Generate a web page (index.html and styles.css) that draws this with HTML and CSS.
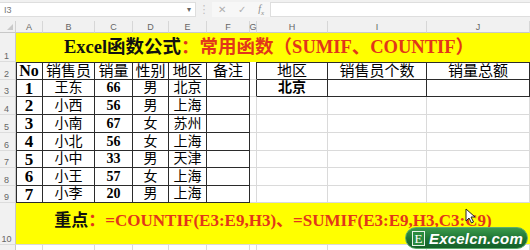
FILE: index.html
```html
<!DOCTYPE html>
<html lang="zh-CN">
<head>
<meta charset="utf-8">
<title>Excel函数公式</title>
<link rel="stylesheet" href="styles.css">
</head>
<body>
<div class="app">
  <div class="fbar">
    <div class="namebox"><span>I3</span><span class="dd">▾</span></div>
    <div class="sep">⋮</div>
    <div class="fxbox"><span class="ico">✕</span><span class="ico">✓</span><span class="ico fx">f<sub>x</sub></span></div>
    <div class="finput"></div>
  </div>
  <div class="sheet">
    <div class="corner"><span class="tri"></span></div>
    <div class="ch">A</div><div class="ch">B</div><div class="ch">C</div><div class="ch">D</div><div class="ch">E</div><div class="ch">F</div><div class="ch">G</div><div class="ch">H</div><div class="ch">I</div><div class="ch">J</div>

    <div class="rh">1</div>
    <div class="title"><span class="blk">Excel函数公式</span><span class="red">：常用函数（SUMIF、COUNTIF）</span></div>

    <div class="rh">2</div>
    <div class="c t tt tl hd num">No</div>
    <div class="c t tt hd">销售员</div>
    <div class="c t tt hd">销量</div>
    <div class="c t tt hd">性别</div>
    <div class="c t tt hd">地区</div>
    <div class="c t tt hd">备注</div>
    <div class="c gr"></div>
    <div class="c t tt hd">地区</div>
    <div class="c t tt hd">销售员个数</div>
    <div class="c t tt hd">销量总额</div>

    <div class="rh">3</div>
    <div class="c t tl num">1</div><div class="c t cj">王东</div><div class="c t sm">66</div><div class="c t cj">男</div><div class="c t cj">北京</div><div class="c t"></div>
    <div class="c gr"></div>
    <div class="c t cj bold">北京</div><div class="c t"></div><div class="c t"></div>

    <div class="rh">4</div>
    <div class="c t tl num">2</div><div class="c t cj">小西</div><div class="c t sm">56</div><div class="c t cj">男</div><div class="c t cj">上海</div><div class="c t"></div>
    <div class="c"></div><div class="c"></div><div class="c"></div><div class="c"></div>

    <div class="rh">5</div>
    <div class="c t tl num">3</div><div class="c t cj">小南</div><div class="c t sm">67</div><div class="c t cj">女</div><div class="c t cj">苏州</div><div class="c t"></div>
    <div class="c"></div><div class="c"></div><div class="c"></div><div class="c"></div>

    <div class="rh">6</div>
    <div class="c t tl num">4</div><div class="c t cj">小北</div><div class="c t sm">56</div><div class="c t cj">女</div><div class="c t cj">上海</div><div class="c t"></div>
    <div class="c"></div><div class="c"></div><div class="c"></div><div class="c"></div>

    <div class="rh">7</div>
    <div class="c t tl num">5</div><div class="c t cj">小中</div><div class="c t sm">33</div><div class="c t cj">男</div><div class="c t cj">天津</div><div class="c t"></div>
    <div class="c"></div><div class="c"></div><div class="c"></div><div class="c"></div>

    <div class="rh">8</div>
    <div class="c t tl num">6</div><div class="c t cj">小王</div><div class="c t sm">57</div><div class="c t cj">女</div><div class="c t cj">上海</div><div class="c t"></div>
    <div class="c"></div><div class="c"></div><div class="c"></div><div class="c"></div>

    <div class="rh">9</div>
    <div class="c t tl num">7</div><div class="c t cj">小李</div><div class="c t sm">20</div><div class="c t cj">男</div><div class="c t cj">上海</div><div class="c t"></div>
    <div class="c"></div><div class="c"></div><div class="c"></div><div class="c"></div>

    <div class="rh">10</div>
    <div class="foot"><span class="blk">重点</span><span class="red">：=COUNTIF(E3:E9,H3)、=SUMIF(E3:E9,H3,C3:C9)</span></div>

    <div class="rh"></div>
    <div class="c"></div><div class="c"></div><div class="c"></div><div class="c"></div><div class="c"></div><div class="c"></div><div class="c"></div><div class="c"></div><div class="c"></div><div class="c"></div>
  </div>

  <svg class="cursor" width="11" height="16" viewBox="0 0 11 16"><path d="M1 1 L1 13 L4 10 L6.5 15 L8.5 14 L6 9 L10 9 Z" fill="#fff" stroke="#222" stroke-width="1"/></svg>

  <div class="logo"><span class="ebox">E</span><span class="ltext">Excelcn.com</span></div>
</div>
</body>
</html>
```
FILE: styles.css
```css
html, body {
  margin: 0;
  padding: 0;
  background: #fff;
}
.app {
  position: relative;
  width: 530px;
  height: 250px;
  overflow: hidden;
  font-family: "Liberation Serif", "Noto Sans CJK SC", serif;
}
.fbar {
  height: 21px;
  background: #f1f1f1;
  display: flex;
  align-items: center;
  box-sizing: border-box;
  padding-bottom: 2px;
}
.namebox {
  width: 196px;
  height: 15px;
  box-sizing: border-box;
  background: #fff;
  border: 1px solid #dedede;
  border-left: none;
  display: flex;
  align-items: center;
  justify-content: space-between;
  padding: 0 4px 0 4px;
  font: 9px "Liberation Sans", sans-serif;
  color: #777;
}
.dd {
  font-size: 8px;
  color: #666;
}
.sep {
  width: 16px;
  text-align: center;
  color: #bdbdbd;
  font: 11px "DejaVu Sans", sans-serif;
}
.fxbox {
  width: 58px;
  height: 15px;
  display: flex;
  align-items: center;
  justify-content: space-around;
  background: #f7f7f7;
  color: #b0b0b0;
  font: 10px "DejaVu Sans", sans-serif;
}
.fx {
  font-family: "Liberation Serif", serif;
  font-style: italic;
  color: #8a8a8a;
}
.fx sub {
  font-size: 7px;
}
.finput {
  flex: 1;
  height: 15px;
  background: #fff;
  border: 1px solid #dedede;
  border-right: none;
  box-sizing: border-box;
}
.sheet {
  display: grid;
  grid-template-columns: 16px 27px 52px 38px 36px 38px 43px 7px 71px 99px 103px;
  grid-template-rows: 12px 29px 18px 17px 18px 18px 18px 17px 18px 17px 42px 12px;
}
.corner {
  background: #f1f1f1;
  border-right: 1px solid #d2d2d2;
  border-bottom: 1px solid #c8c8c8;
  box-sizing: border-box;
  position: relative;
}
.tri {
  position: absolute;
  right: 2px;
  bottom: 2px;
  width: 0;
  height: 0;
  border-left: 6px solid transparent;
  border-bottom: 6px solid #c9c9c9;
}
.ch {
  background: #f1f1f1;
  border-right: 1px solid #d7d7d7;
  border-bottom: 1px solid #c8c8c8;
  box-sizing: border-box;
  font: 9px "Liberation Sans", sans-serif;
  color: #666;
  display: flex;
  align-items: center;
  justify-content: center;
}
.rh {
  background: #f1f1f1;
  border-right: 1px solid #c8c8c8;
  border-bottom: 1px solid #dcdcdc;
  box-sizing: border-box;
  font: 9px "Liberation Sans", sans-serif;
  color: #666;
  display: flex;
  align-items: flex-end;
  justify-content: center;
  padding-right: 2px;
  line-height: 10px;
}
.c {
  box-sizing: border-box;
  border-right: 1px solid #dadada;
  border-bottom: 1px solid #dadada;
  display: flex;
  align-items: center;
  justify-content: center;
  color: #000;
  white-space: nowrap;
  line-height: 1;
}
.t {
  border-right-color: #2b2b2b;
  border-bottom-color: #2b2b2b;
}
.tt {
  border-top: 1px solid #2b2b2b;
}
.tl {
  box-shadow: inset 1px 0 0 #2b2b2b;
}
.gr {
  border-right-color: #2b2b2b;
}
.hd {
  font-size: 15px;
  font-weight: 400;
}
.num {
  font-size: 17px;
  font-weight: 700;
}
.hd.num {
  font-size: 16px;
}
.cj {
  font-size: 14px;
  font-weight: 400;
}
.bold {
  font-weight: 700;
}
.sm {
  font-size: 14px;
  font-weight: 700;
}
.title {
  grid-column: 2 / -1;
  background: #ffff00;
  display: flex;
  align-items: center;
  justify-content: center;
  font-size: 18.5px;
  font-weight: 700;
  white-space: nowrap;
  line-height: 1;
  padding-right: 8px;
}
.foot {
  grid-column: 2 / -1;
  background: #ffff00;
  display: flex;
  align-items: center;
  justify-content: center;
  font-size: 17px;
  font-weight: 700;
  white-space: nowrap;
  line-height: 1;
  padding-bottom: 6px;
  border-bottom: 1px solid #dadada;
  box-sizing: border-box;
}
.blk {
  color: #111;
}
.red {
  color: #e2361a;
}
.cursor {
  position: absolute;
  left: 465px;
  top: 208px;
}
.logo {
  position: absolute;
  left: 405px;
  top: 227px;
  width: 123px;
  height: 22px;
  box-sizing: border-box;
  border-radius: 11px;
  background: linear-gradient(#3a9a4c, #1d7332 55%, #15602a);
  border: 1px solid #5fae6c;
  display: flex;
  align-items: center;
  padding-left: 6px;
  gap: 4px;
}
.ebox {
  width: 13px;
  height: 15px;
  box-sizing: border-box;
  border: 1px solid #e8f3e8;
  background: #2a8a3e;
  color: #fff;
  font: 13px "Liberation Serif", serif;
  display: flex;
  align-items: center;
  justify-content: center;
  line-height: 1;
}
.ltext {
  color: #fff;
  font: italic 700 15px "Liberation Sans", sans-serif;
  letter-spacing: 0.2px;
}
```
